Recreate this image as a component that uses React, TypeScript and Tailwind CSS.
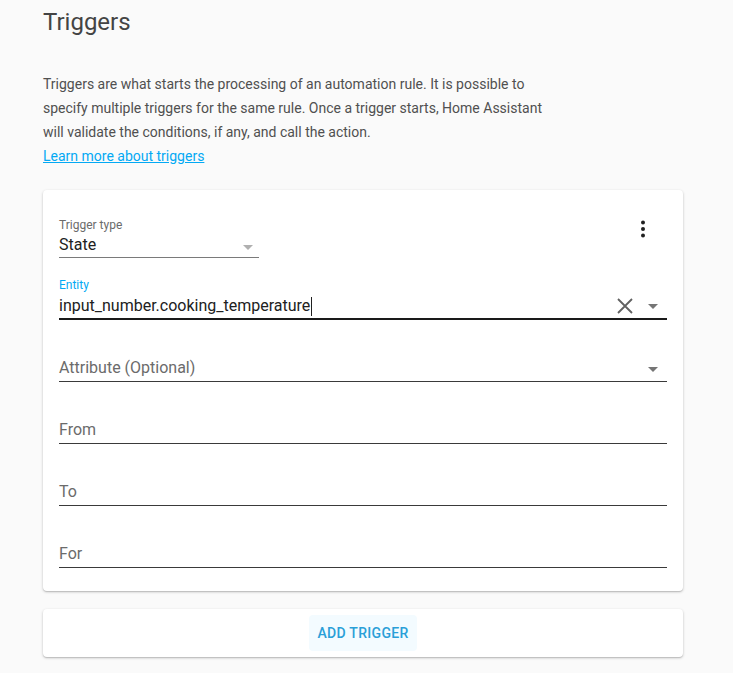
const font = { fontFamily: "Roboto, 'Noto Sans', sans-serif" }

const Arrow = ({ color }: { color: string }) => (
    <svg width="24" height="24" viewBox="0 0 24 24" className="shrink-0">
        <path d="M7 10l5 5 5-5z" fill={color} />
    </svg>
)

const PlainField = ({ label, arrow }: { label: string; arrow?: boolean }) => (
    <div className="h-[62px] border-b border-[#3a3a3a] flex items-end justify-between pb-[2px]">
        <span className="text-base leading-5 pb-[1px] text-[#6b6b6b]">{label}</span>
        {arrow && (
            <span className="mr-[2px] h-5 flex items-center">
                <Arrow color="#757575" />
            </span>
        )}
    </div>
)

export default function App() {
    return (
        <div className="min-h-screen bg-[#fafafa] px-[43px] pt-[6px] pb-8 overflow-hidden" style={font}>
            <h1 className="text-2xl leading-8 text-[#444444]">Triggers</h1>

            <div className="mt-[34px] w-[510px] text-sm leading-6 text-[#505050]">
                <p>
                    Triggers are what starts the processing of an automation rule. It is possible to
                    specify multiple triggers for the same rule. Once a trigger starts, Home Assistant
                    will validate the conditions, if any, and call the action.
                </p>
                <a href="#" className="text-[#03a9f4] underline">Learn more about triggers</a>
            </div>

            {/* trigger card */}
            <div className="mt-[22px] w-[640px] bg-white rounded-[4px] shadow-[0_1px_3px_rgba(0,0,0,0.2),0_1px_1px_rgba(0,0,0,0.12)] px-4 pt-[27px] pb-[23px]">
                <div className="flex justify-between items-start">
                    <div className="w-[200px] border-b border-[#7a7a7a] pb-[2px]">
                        <div className="text-xs leading-4 text-[#6b6b6b]">Trigger type</div>
                        <div className="mt-[2px] h-5 flex items-center justify-between">
                            <span className="text-base leading-5 text-[#212121]">State</span>
                            <span className="mr-[-1px] h-5 flex items-center mt-[3px]">
                                <Arrow color="#b0b0b0" />
                            </span>
                        </div>
                    </div>
                    <button className="w-12 h-12 -mt-[12px] flex items-center justify-center">
                        <svg width="24" height="24" viewBox="0 0 24 24">
                            <circle cx="12" cy="5.5" r="2" fill="#212121" />
                            <circle cx="12" cy="12" r="2" fill="#212121" />
                            <circle cx="12" cy="18.5" r="2" fill="#212121" />
                        </svg>
                    </button>
                </div>

                {/* entity, focused */}
                <div className="mt-[19px] border-b-2 border-[#1a1a1a] pb-[2px]">
                    <div className="text-xs leading-4 text-[#03a9f4]">Entity</div>
                    <div className="mt-[3px] h-5 flex items-center justify-between">
                        <span className="text-base leading-5 text-[#212121] flex items-center">
                            input_number.cooking_temperature
                            <span className="inline-block w-px h-[19px] bg-[#212121] ml-px" />
                        </span>
                        <span className="flex items-center h-5 mr-[2px]">
                            <svg width="24" height="24" viewBox="0 0 24 24" className="mr-[4px]">
                                <path d="M5 5l14 14M19 5L5 19" stroke="#616161" strokeWidth="1.8" fill="none" />
                            </svg>
                            <Arrow color="#757575" />
                        </span>
                    </div>
                </div>

                <PlainField label="Attribute (Optional)" arrow />
                <PlainField label="From" />
                <PlainField label="To" />
                <PlainField label="For" />
            </div>

            {/* add trigger */}
            <div className="mt-[18px] w-[640px] bg-white rounded-[4px] shadow-[0_1px_3px_rgba(0,0,0,0.2),0_1px_1px_rgba(0,0,0,0.12)] py-[6px] flex justify-center">
                <button className="h-9 px-2 rounded-[4px] bg-[#f3fbff] text-sm font-medium tracking-[0.3px] text-[#2a9fd8] uppercase">
                    Add trigger
                </button>
            </div>
        </div>
    )
}
